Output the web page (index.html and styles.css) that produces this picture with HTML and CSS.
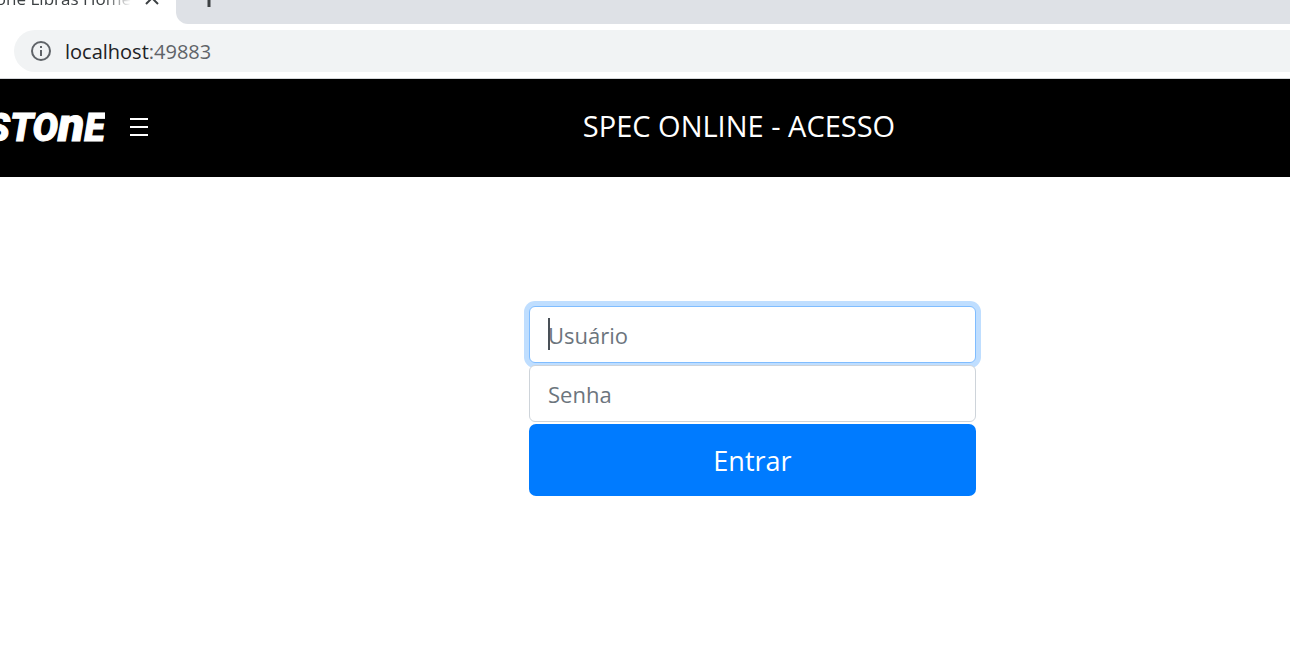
FILE: index.html
```html
<!DOCTYPE html>
<html lang="pt-BR">
<head>
<meta charset="utf-8">
<title>Libras Home</title>
<link rel="stylesheet" href="styles.css">
</head>
<body>
<div class="tabs">
  <div class="tab">
    <span class="tab-title">one Libras Home</span>
    <button class="icon-button" aria-label="Fechar guia"><svg width="14" height="14" viewBox="0 0 14 14"><path d="M1 1L13 13M13 1L1 13" stroke="#3c4043" stroke-width="2"/></svg></button>
  </div>
  <div class="tab-rest">
    <button class="icon-button" aria-label="Nova guia"><svg width="18" height="18" viewBox="0 0 18 18"><path d="M9 0V18M0 9H18" stroke="#3c4043" stroke-width="3"/></svg></button>
  </div>
</div>
<div class="toolbar">
  <div class="address">
    <svg width="22" height="22" viewBox="0 0 22 22" fill="none" stroke="#5f6368" stroke-width="2"><circle cx="11" cy="11" r="9"/><path d="M11 10V16M11 6V8"/></svg>
    <span class="url">localhost<span class="port">:49883</span></span>
  </div>
</div>
<header class="header">
  <div class="brand"><span class="logo">STO<span class="logo-n">n</span>E</span></div>
  <button class="menu" aria-label="Menu"><svg width="18" height="18" viewBox="0 0 18 18"><path d="M0 1H18M0 9H18M0 17H18" stroke="#fff" stroke-width="2"/></svg></button>
  <h1 class="title">SPEC ONLINE - ACESSO</h1>
</header>
<main class="main">
  <form class="login">
    <div class="field">
      <input class="input input-active" type="text" placeholder="Usuário" aria-label="Usuário">
      <span class="caret"></span>
    </div>
    <input class="input" type="password" placeholder="Senha" aria-label="Senha">
    <button class="submit" type="button">Entrar</button>
  </form>
</main>
</body>
</html>
```
FILE: styles.css
```css
* { box-sizing: border-box; }
body {
  margin: 0;
  background: #fff;
  font-family: "Open Sans", "Noto Sans", sans-serif;
  overflow-x: hidden;
}
button { font-family: inherit; cursor: pointer; }
.tabs {
  display: flex;
  height: 24px;
  overflow: hidden;
  background: #fff;
}
.tab {
  display: flex;
  flex: 0 0 176px;
  align-items: flex-start;
  gap: 14px;
}
.tab-title {
  display: flex;
  flex: 0 0 131px;
  justify-content: flex-end;
  margin-top: -13px;
  overflow: hidden;
  white-space: nowrap;
  font-size: 17px;
  line-height: 24px;
  color: #3c4043;
  -webkit-mask-image: linear-gradient(to right, #000 80%, transparent);
  mask-image: linear-gradient(to right, #000 80%, transparent);
}
.icon-button {
  display: block;
  margin-top: -9px;
  padding: 0;
  border: 0;
  background: none;
  line-height: 0;
}
.tab-rest {
  flex: 1;
  padding-left: 24px;
  border-bottom-left-radius: 12px;
  background: #dee1e6;
}
.tab-rest .icon-button { margin-top: -11px; }
.toolbar {
  padding: 6px 0 6px 14px;
  border-bottom: 1px solid #d5d7da;
}
.address {
  display: flex;
  align-items: center;
  gap: 13px;
  height: 42px;
  padding-left: 16px;
  border-radius: 21px 0 0 21px;
  background: #f1f3f4;
}
.url { padding-top: 2px; font-size: 20px; line-height: 28px; color: #202124; }
.port { color: #5f6368; }
.header {
  display: grid;
  grid-template-columns: 105px auto 1fr;
  align-items: center;
  height: 98px;
  background: #000;
  color: #fff;
}
.brand {
  display: flex;
  justify-content: flex-end;
  padding-bottom: 4px;
  overflow: hidden;
}
.logo {
  font: italic 900 38px/48px Roboto, sans-serif;
  -webkit-text-stroke: 1px #fff;
}
.logo-n { font-size: 48px; line-height: 1; }
.menu { margin-left: 25px; padding: 0 0 2px; border: 0; background: none; line-height: 0; }
.title {
  margin: 0;
  padding: 0 0 4px 40px;
  font-size: 29px;
  font-weight: 400;
  line-height: 40px;
  text-align: center;
}
.main { padding: 129px 0 80px 215px; }
.login {
  display: flex;
  flex-direction: column;
  gap: 2px;
  width: 42%;
  max-width: 447px;
  margin: 0 auto;
}
.field { position: relative; display: flex; }
.input {
  width: 100%;
  height: 57px;
  padding: 0 18px;
  border: 1px solid #ced4da;
  border-radius: 6px;
  outline: 0;
  background: #fff;
  font-family: inherit;
  font-size: 22px;
  color: #495057;
}
.input::placeholder { color: #6c757d; opacity: 1; }
.input-active { border-color: #80bdff; box-shadow: 0 0 0 5px #bfdeff; }
.login > .input { position: relative; }
.caret {
  position: absolute;
  top: 12px;
  left: 19px;
  width: 2px;
  height: 32px;
  background: #495057;
}
.submit {
  height: 72px;
  border: 0;
  border-radius: 7px;
  background: #007bff;
  color: #fff;
  font-size: 27px;
}
```
